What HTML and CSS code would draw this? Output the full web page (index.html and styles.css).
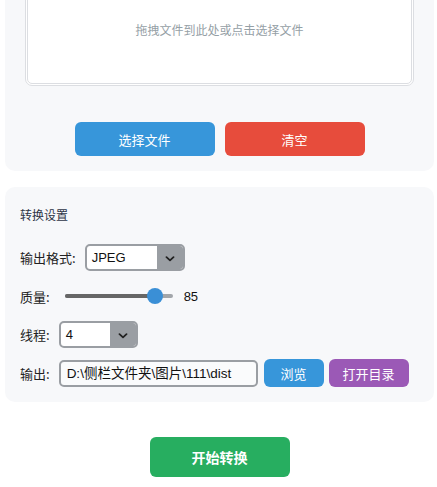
FILE: index.html
```html
<!DOCTYPE html>
<html lang="zh">
<head>
<meta charset="utf-8">
<title>图片转换</title>
<link rel="stylesheet" href="styles.css">
</head>
<body>
<div class="page">
  <section class="panel upload">
    <div class="dropzone">拖拽文件到此处或点击选择文件</div>
    <div class="upload-actions">
      <button class="btn btn-blue btn-wide">选择文件</button>
      <button class="btn btn-red btn-wide">清空</button>
    </div>
  </section>

  <section class="panel settings">
    <h3 class="title">转换设置</h3>
    <div class="row">
      <span class="label">输出格式:</span>
      <div class="select select-format">
        <span class="select-value">JPEG</span>
        <span class="select-arrow"><svg width="10" height="6" viewBox="0 0 10 6"><path d="M1.5 1.2 L5 4.4 L8.5 1.2" fill="none" stroke="#222" stroke-width="1.8" stroke-linecap="round" stroke-linejoin="round"/></svg></span>
      </div>
    </div>
    <div class="row">
      <span class="label">质量:</span>
      <div class="slider">
        <div class="slider-fill" style="width:90px"></div>
        <div class="slider-thumb" style="left:82px"></div>
      </div>
      <span class="slider-value">85</span>
    </div>
    <div class="row">
      <span class="label">线程:</span>
      <div class="select select-threads">
        <span class="select-value">4</span>
        <span class="select-arrow"><svg width="10" height="6" viewBox="0 0 10 6"><path d="M1.5 1.2 L5 4.4 L8.5 1.2" fill="none" stroke="#222" stroke-width="1.8" stroke-linecap="round" stroke-linejoin="round"/></svg></span>
      </div>
    </div>
    <div class="row row-output">
      <span class="label">输出:</span>
      <div class="path-input">D:\侧栏文件夹\图片\111\dist</div>
      <button class="btn btn-blue btn-small">浏览</button>
      <button class="btn btn-purple btn-medium">打开目录</button>
    </div>
  </section>

  <div class="start">
    <button class="btn btn-green btn-start">开始转换</button>
  </div>
</div>
</body>
</html>
```

FILE: styles.css
```css
* { box-sizing: border-box; }
html, body { margin: 0; padding: 0; background: #ffffff; }
body {
  font-family: "Liberation Sans", "Noto Sans CJK SC", sans-serif;
  font-size: 13px;
  color: #222;
  overflow: hidden;
}
.page {
  padding: 0 3px 0 5px;
}
.panel {
  background: #f7f8fa;
  border-radius: 10px;
}
.upload {
  margin-top: -48px;
  padding: 20px 20px 15px;
}
.dropzone {
  height: 114px;
  border: 3px double #dcdee2;
  border-radius: 7px;
  background: #ffffff;
  display: flex;
  align-items: center;
  justify-content: center;
  color: #95a0a6;
  font-size: 12px;
  font-family: "Noto Sans CJK SC", sans-serif;
}
.upload-actions {
  margin-top: 36px;
  display: flex;
  justify-content: center;
  gap: 10px;
}
.btn {
  border: none;
  color: #fff;
  font-family: "Noto Sans CJK SC", sans-serif;
  border-radius: 6px;
  padding: 0;
  cursor: pointer;
}
.btn-blue { background: #3796da; }
.btn-red { background: #e74c3c; }
.btn-purple { background: #9b59b6; }
.btn-green { background: #27ae60; }
.btn-wide {
  width: 140px;
  height: 34px;
  font-size: 13px;
}
.settings {
  margin-top: 16px;
  padding: 18px 15px 15px;
}
.title {
  margin: 0 0 19px;
  font-size: 12px;
  font-weight: normal;
  color: #2c3446;
  line-height: 20px;
  font-family: "Noto Sans CJK SC", sans-serif;
}
.row {
  display: flex;
  align-items: center;
  gap: 9px;
  height: 27px;
  margin-bottom: 11.5px;
}
.row:last-child { margin-bottom: 0; }
.label {
  font-family: "Noto Sans CJK SC", sans-serif;
  font-size: 13px;
  color: #222;
  white-space: nowrap;
}
.select {
  display: flex;
  height: 27px;
  border: 2px solid #9a9ea3;
  border-radius: 5px;
  background: #fff;
  overflow: hidden;
}
.select-format { width: 100px; }
.select-threads { width: 79px; }
.select-value {
  flex: 1;
  padding-left: 5px;
  line-height: 23px;
  font-size: 13px;
  color: #111;
}
.select-arrow {
  width: 26px;
  background: #9a9ea3;
  display: flex;
  align-items: center;
  justify-content: center;
  padding-top: 2px;
}
.slider {
  position: relative;
  width: 108px;
  height: 4px;
  margin-left: 6px;
  background: #a2a6aa;
  border-radius: 2px;
}
.slider-fill {
  height: 4px;
  background: #666;
  border-radius: 2px 0 0 2px;
}
.slider-thumb {
  position: absolute;
  top: -6px;
  width: 16px;
  height: 16px;
  border-radius: 50%;
  background: #3a8fd6;
}
.slider-value {
  margin-left: 2px;
  font-size: 13px;
  color: #111;
}
.row-output { gap: 6px; }
.row-output .label { margin-right: 3px; }
.path-input {
  width: 199px;
  height: 27px;
  border: 2px solid #9a9ea3;
  border-radius: 5px;
  background: #fafbfc;
  padding-left: 6px;
  line-height: 23px;
  font-size: 13.5px;
  color: #111;
  white-space: nowrap;
  overflow: hidden;
}
.btn-small {
  width: 60px;
  height: 28px;
  font-size: 13px;
}
.btn-medium {
  width: 80px;
  height: 28px;
  font-size: 13px;
  margin-left: -1px;
}
.start {
  display: flex;
  justify-content: center;
  padding-top: 35px;
}
.btn-start {
  width: 140px;
  height: 40px;
  font-size: 14px;
  font-weight: bold;
}
```
